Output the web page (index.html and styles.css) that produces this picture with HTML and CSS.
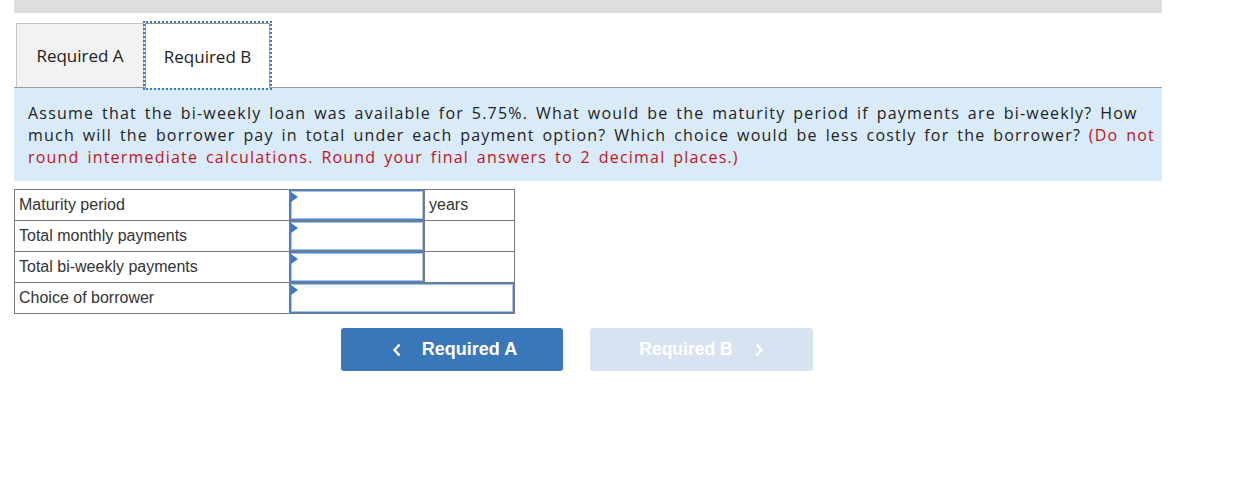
FILE: index.html
```html
<!DOCTYPE html>
<html>
<head>
<meta charset="utf-8">
<link rel="stylesheet" href="styles.css">
</head>
<body>
<div class="page">
  <div class="topbar"></div>
  <div class="tabs">
    <div class="tab tab-a">Required A</div>
    <div class="tab tab-b">Required B</div>
  </div>
  <div class="question">
    Assume that the bi-weekly loan was available for 5.75%. What would be the maturity period if payments are bi-weekly? How much will the borrower pay in total under each payment option? Which choice would be less costly for the borrower? <span class="note">(Do not round intermediate calculations. Round your final answers to 2 decimal places.)</span>
  </div>
  <table class="answers">
    <tr>
      <td class="label">Maturity period</td>
      <td class="inp"><div class="box"><span class="flag"></span></div></td>
      <td class="unit">years</td>
    </tr>
    <tr>
      <td class="label">Total monthly payments</td>
      <td class="inp"><div class="box"><span class="flag"></span></div></td>
      <td class="unit"></td>
    </tr>
    <tr>
      <td class="label">Total bi-weekly payments</td>
      <td class="inp"><div class="box"><span class="flag"></span></div></td>
      <td class="unit"></td>
    </tr>
    <tr>
      <td class="label">Choice of borrower</td>
      <td class="inp" colspan="2"><div class="box"><span class="flag"></span></div></td>
    </tr>
  </table>
  <div class="nav">
    <div class="btn btn-prev">
      <svg class="chev" width="10" height="14" viewBox="0 0 10 14"><path d="M7.5 1.5 L2.5 7 L7.5 12.5" fill="none" stroke="#fff" stroke-width="2.4"/></svg>
      <span>Required A</span>
    </div>
    <div class="btn btn-next">
      <span>Required B</span>
      <svg class="chev" width="10" height="14" viewBox="0 0 10 14"><path d="M2.5 1.5 L7.5 7 L2.5 12.5" fill="none" stroke="#fff" stroke-width="2.4"/></svg>
    </div>
  </div>
</div>
</body>
</html>
```

FILE: styles.css
```css
html, body {
  margin: 0;
  padding: 0;
  background: #fff;
}

.page {
  width: 1148px;
  margin-left: 14px;
}

.topbar {
  height: 13px;
  background: #dedede;
}

.tabs {
  display: flex;
  margin-top: 10px;
  padding-left: 2px;
  height: 64px;
  border-bottom: 1px solid #9a9a9a;
  align-items: flex-end;
}

.tab {
  box-sizing: border-box;
  height: 64px;
  display: flex;
  align-items: center;
  justify-content: center;
  font-family: "Open Sans", "Noto Sans", sans-serif;
  font-size: 17px;
  color: #222;
}

.tab-a {
  width: 128px;
  background: #f2f2f2;
  border: 1px solid #c6c6c6;
  border-bottom: none;
}

.tab-b {
  width: 125px;
  margin-left: 1px;
  height: 65px;
  margin-bottom: -1px;
  background: #fff;
  border: 1px solid #9a9a9a;
  border-bottom: none;
  outline: 2px dotted #3a77c0;
  outline-offset: 0px;
}

.question {
  background: #d9ebf9;
  padding: 14px 0 13px 14px;
  font-family: "Open Sans", "Noto Sans", sans-serif;
  font-size: 16px;
  letter-spacing: 1.2px;
  word-spacing: 2.5px;
  line-height: 22px;
  color: #222;
}

.note {
  color: #c0141c;
}

.answers {
  margin-top: 8px;
  border-collapse: collapse;
  font-family: "Liberation Sans", Arial, sans-serif;
  font-size: 16px;
  color: #333;
}

.answers td {
  border: 1px solid #7a7a7a;
  height: 31px;
  padding: 0;
  box-sizing: border-box;
  vertical-align: middle;
}

.answers td.label {
  width: 275px;
  padding-left: 4px;
}

.answers td.inp {
  width: 135px;
}

.answers td.unit {
  width: 90px;
  padding-left: 4px;
}

.box {
  position: relative;
  box-sizing: border-box;
  height: 30px;
  border: 1px solid #4a80c4;
  box-shadow: inset 0 0 0 1px #a9c6ea;
  background: #fff;
}

.flag {
  position: absolute;
  left: 0;
  top: 1px;
  width: 0;
  height: 0;
  border-top: 5px solid transparent;
  border-bottom: 5px solid transparent;
  border-left: 7px solid #3b78c0;
}

.nav {
  display: flex;
  gap: 27px;
  margin-top: 14px;
  padding-left: 327px;
}

.btn {
  box-sizing: border-box;
  width: 222px;
  height: 43px;
  border-radius: 3px;
  display: flex;
  align-items: center;
  justify-content: center;
  font-family: "Liberation Sans", Arial, sans-serif;
  font-weight: bold;
  font-size: 17.5px;
  color: #fff;
}

.btn-prev {
  background: #3a77b9;
  gap: 20px;
  padding-left: 5px;
  font-size: 18px;
}

.btn-next {
  background: #d7e3f1;
  width: 223px;
  gap: 21px;
}

.chev {
  display: block;
}
```
